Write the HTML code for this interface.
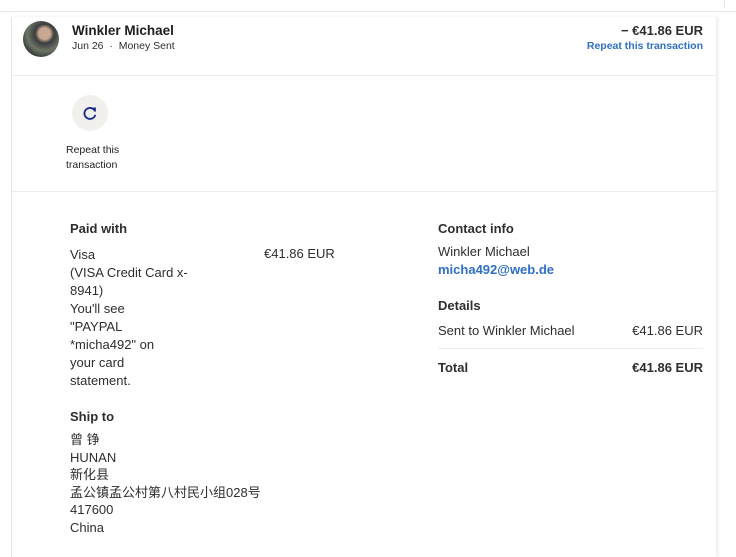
<!DOCTYPE html>
<html><head><meta charset="utf-8"><style>
*{margin:0;padding:0;box-sizing:border-box}
body{width:736px;height:549px;background:#fff;font-family:"Liberation Sans","Noto Sans CJK SC",sans-serif;color:#2c2e2f;position:relative;overflow:hidden;font-size:13px}
.a{position:absolute;white-space:nowrap}
.b{font-weight:bold}
.hl{position:absolute;height:1px;background:#eaeced}
</style></head><body>
<div class="hl" style="left:0;top:11px;width:736px;background:#e6e6e6"></div>
<div style="position:absolute;left:724px;top:0;width:1px;height:8px;background:#e3e3e3"></div>
<div style="position:absolute;left:11px;top:17px;width:705px;height:540px;border-left:1px solid #e6e6e6;box-shadow:2px 0 3px rgba(0,0,0,0.08)"></div>
<div style="position:absolute;left:23px;top:21px;width:36px;height:36px;border-radius:50%;background:radial-gradient(circle at 60% 35%,#c9a790 0 18%,#3a3c3e 30%,#6d7565 55%,#2b2d2f 80%)"></div>
<div class="a b" style="left:72px;top:23px;font-size:13.5px;color:#1c1e20">Winkler Michael</div>
<div class="a" style="left:72px;top:40px;font-size:10.5px">Jun 26 &nbsp;·&nbsp; Money Sent</div>
<div class="a b" style="right:33px;top:23px;font-size:13px">− €41.86 EUR</div>
<div class="a b" style="right:33px;top:40px;font-size:10.5px;color:#2f6fc4">Repeat this transaction</div>
<div class="hl" style="left:12px;top:75px;width:704px"></div>
<div style="position:absolute;left:72px;top:95px;width:36px;height:36px;border-radius:50%;background:#f2f0ec"></div>
<svg style="position:absolute;left:82px;top:105px" width="16" height="16" viewBox="0 0 16 16"><path d="M13 6.2A5.5 5.5 0 1 0 13.3 9.8" fill="none" stroke="#1b2f8f" stroke-width="1.9"/><path d="M9.6 2.8L14 2.5 13.7 7.2z" fill="#1b2f8f"/></svg>
<div class="a" style="left:66px;top:143px;font-size:10.5px;line-height:15px;color:#1c1e20">Repeat this<br>transaction</div>
<div class="hl" style="left:12px;top:191px;width:704px"></div>
<div class="a b" style="left:70px;top:221px">Paid with</div>
<div class="a" style="left:70px;top:246px;line-height:18px">Visa<br>(VISA Credit Card x-<br>8941)<br>You'll see<br>"PAYPAL<br>*micha492" on<br>your card<br>statement.</div>
<div class="a" style="left:264px;top:246px">€41.86 EUR</div>
<div class="a b" style="left:70px;top:409px">Ship to</div>
<div class="a" style="left:70px;top:431px;line-height:17.5px">曾 铮<br>HUNAN<br>新化县<br>孟公镇孟公村第八村民小组028号<br>417600<br>China</div>
<div class="a b" style="left:438px;top:221px">Contact info</div>
<div class="a" style="left:438px;top:244px">Winkler Michael</div>
<div class="a b" style="left:438px;top:262px;color:#2f6fc4">micha492@web.de</div>
<div class="a b" style="left:438px;top:298px">Details</div>
<div class="a" style="left:438px;top:323px">Sent to Winkler Michael</div>
<div class="a" style="right:33px;top:323px">€41.86 EUR</div>
<div class="hl" style="left:438px;top:348px;width:265px"></div>
<div class="a b" style="left:438px;top:360px">Total</div>
<div class="a b" style="right:33px;top:360px">€41.86 EUR</div>
</body></html>
